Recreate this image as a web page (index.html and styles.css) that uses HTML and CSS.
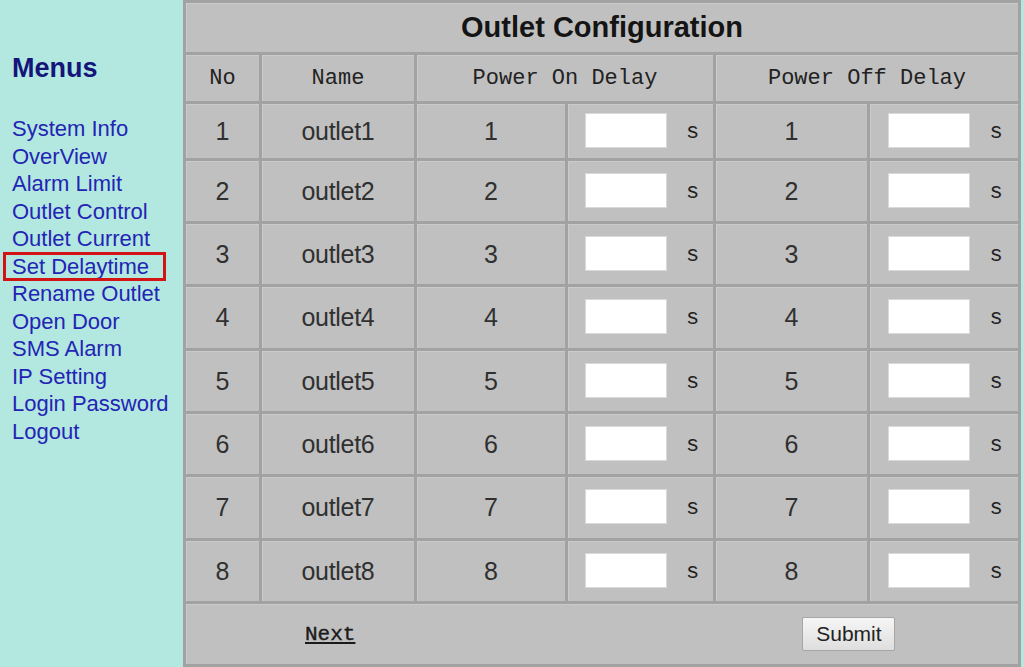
FILE: index.html
```html
<!DOCTYPE html>
<html>
<head>
<meta charset="utf-8">
<title>Outlet Configuration</title>
<link rel="stylesheet" href="styles.css">
</head>
<body>
<div class="page">
  <nav class="sidebar">
    <h2 class="menus-title">Menus</h2>
    <ul class="menu">
      <li><a href="#">System Info</a></li>
      <li><a href="#">OverView</a></li>
      <li><a href="#">Alarm Limit</a></li>
      <li><a href="#">Outlet Control</a></li>
      <li><a href="#">Outlet Current</a></li>
      <li class="marked"><a href="#">Set Delaytime</a></li>
      <li><a href="#">Rename Outlet</a></li>
      <li><a href="#">Open Door</a></li>
      <li><a href="#">SMS Alarm</a></li>
      <li><a href="#">IP Setting</a></li>
      <li><a href="#">Login Password</a></li>
      <li><a href="#">Logout</a></li>
    </ul>
  </nav>
  <main class="content">
    <table class="config">
      <colgroup>
        <col class="c-no"><col class="c-name"><col class="c-onv"><col class="c-oni"><col class="c-offv"><col class="c-offi">
      </colgroup>
      <tr class="title-row"><th colspan="6" class="title">Outlet Configuration</th></tr>
      <tr class="head-row">
        <th class="mono">No</th>
        <th class="mono">Name</th>
        <th class="mono" colspan="2">Power On Delay</th>
        <th class="mono" colspan="2">Power Off Delay</th>
      </tr>
      <tr class="data-row first">
        <td class="num">1</td><td class="name">outlet1</td><td class="num">1</td>
        <td><div class="inp"><input type="text"><span class="unit">s</span></div></td>
        <td class="num">1</td>
        <td><div class="inp"><input type="text"><span class="unit">s</span></div></td>
      </tr>
      <tr class="data-row">
        <td class="num">2</td><td class="name">outlet2</td><td class="num">2</td>
        <td><div class="inp"><input type="text"><span class="unit">s</span></div></td>
        <td class="num">2</td>
        <td><div class="inp"><input type="text"><span class="unit">s</span></div></td>
      </tr>
      <tr class="data-row">
        <td class="num">3</td><td class="name">outlet3</td><td class="num">3</td>
        <td><div class="inp"><input type="text"><span class="unit">s</span></div></td>
        <td class="num">3</td>
        <td><div class="inp"><input type="text"><span class="unit">s</span></div></td>
      </tr>
      <tr class="data-row tall">
        <td class="num">4</td><td class="name">outlet4</td><td class="num">4</td>
        <td><div class="inp"><input type="text"><span class="unit">s</span></div></td>
        <td class="num">4</td>
        <td><div class="inp"><input type="text"><span class="unit">s</span></div></td>
      </tr>
      <tr class="data-row">
        <td class="num">5</td><td class="name">outlet5</td><td class="num">5</td>
        <td><div class="inp"><input type="text"><span class="unit">s</span></div></td>
        <td class="num">5</td>
        <td><div class="inp"><input type="text"><span class="unit">s</span></div></td>
      </tr>
      <tr class="data-row">
        <td class="num">6</td><td class="name">outlet6</td><td class="num">6</td>
        <td><div class="inp"><input type="text"><span class="unit">s</span></div></td>
        <td class="num">6</td>
        <td><div class="inp"><input type="text"><span class="unit">s</span></div></td>
      </tr>
      <tr class="data-row tall">
        <td class="num">7</td><td class="name">outlet7</td><td class="num">7</td>
        <td><div class="inp"><input type="text"><span class="unit">s</span></div></td>
        <td class="num">7</td>
        <td><div class="inp"><input type="text"><span class="unit">s</span></div></td>
      </tr>
      <tr class="data-row">
        <td class="num">8</td><td class="name">outlet8</td><td class="num">8</td>
        <td><div class="inp"><input type="text"><span class="unit">s</span></div></td>
        <td class="num">8</td>
        <td><div class="inp"><input type="text"><span class="unit">s</span></div></td>
      </tr>
      <tr class="foot-row">
        <td colspan="6">
          <div class="foot">
            <a href="#" class="next mono">Next</a>
            <button type="button" class="submit">Submit</button>
          </div>
        </td>
      </tr>
    </table>
  </main>
</div>
</body>
</html>
```
FILE: styles.css
```css
html, body {
  margin: 0;
  padding: 0;
  background: #b2e8e0;
  font-family: "Liberation Sans", Arial, sans-serif;
}
.page {
  display: flex;
  width: 1024px;
  height: 667px;
  overflow: hidden;
}
.sidebar {
  width: 183px;
  flex: none;
  padding: 53px 0 0 12px;
  box-sizing: border-box;
}
.menus-title {
  margin: 0 0 31px 0;
  font-size: 27px;
  line-height: 31px;
  font-weight: bold;
  color: #14147a;
}
.menu {
  list-style: none;
  margin: 0;
  padding: 0;
}
.menu li {
  font-size: 22px;
  line-height: 27.5px;
  height: 27.5px;
  white-space: nowrap;
}
.menu a {
  color: #2424b4;
  text-decoration: none;
}
.menu li.marked {
  position: relative;
}
.menu li.marked::after {
  content: "";
  position: absolute;
  left: -9px;
  top: -1px;
  width: 157px;
  height: 23px;
  border: 3px solid #d41414;
}
.content {
  flex: none;
}
.config {
  table-layout: fixed;
  width: 838px;
  border-collapse: separate;
  border-spacing: 3px;
  background: #a2a2a2;
}
.config th, .config td {
  background: #c0c0c0;
  padding: 0;
  text-align: center;
  vertical-align: middle;
  box-shadow: inset 1px 1px 0 #cbcbcb;
}
.c-no { width: 73px; }
.c-name { width: 152px; }
.c-onv { width: 148px; }
.c-oni { width: 145px; }
.c-offv { width: 151px; }
.c-offi { width: 148px; }
.title-row { height: 49px; }
.title {
  font-size: 29px;
  font-weight: bold;
  color: #141414;
}
.head-row { height: 46px; }
.mono {
  font-family: "Liberation Mono", "Courier New", monospace;
  font-weight: normal;
  font-size: 22px;
  color: #222;
}
.data-row { height: 60px; }
.data-row.tall { height: 61px; }
.data-row.first { height: 54px; }
.num, .name {
  font-size: 25px;
  color: #303030;
  padding-bottom: 5px;
}
.name { letter-spacing: -0.3px; }
.inp {
  display: flex;
  align-items: center;
  justify-content: center;
  gap: 19px;
  padding-left: 3px;
  padding-bottom: 2px;
}
.inp input {
  width: 82px;
  height: 35px;
  box-sizing: border-box;
  border: 1px solid #d9d9d9;
  background: #fff;
  margin: 0;
  padding: 0;
}
.unit {
  font-family: "Liberation Mono", "Courier New", monospace;
  font-size: 22px;
  color: #222;
  padding-top: 4px;
}
.foot-row { height: 60px; }
.foot {
  display: flex;
  align-items: center;
  padding-left: 119px;
}
.next {
  color: #1a1a1a;
  text-decoration: underline;
  font-weight: normal;
  font-size: 21px;
  -webkit-text-stroke: 0.4px #1a1a1a;
}
.submit {
  margin-left: 447px;
  width: 93px;
  height: 34px;
  font-family: "Liberation Sans", Arial, sans-serif;
  font-size: 21px;
  color: #222;
  background: linear-gradient(#f6f6f6, #dedede);
  border: 1px solid #a6a6a6;
  border-radius: 2px;
  padding: 0;
}
```
